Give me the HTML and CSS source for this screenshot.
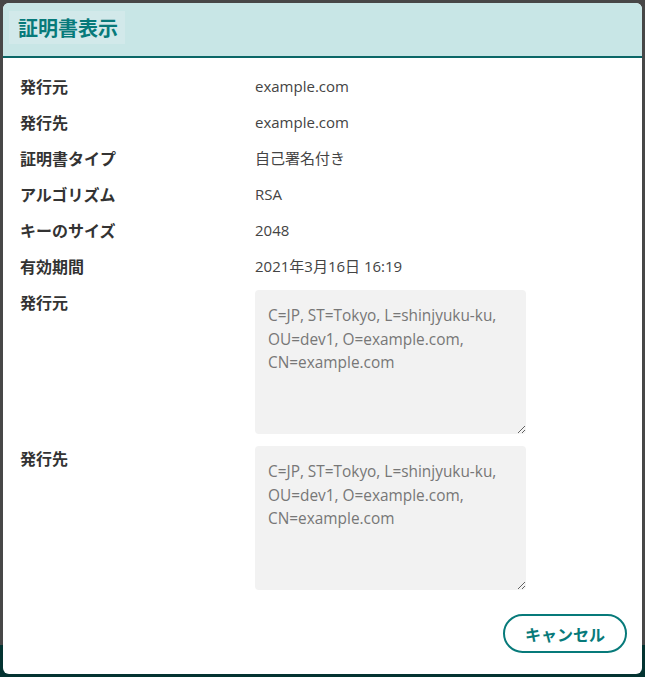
FILE: index.html
```html
<!DOCTYPE html>
<html lang="ja">
<head>
<meta charset="utf-8">
<title>証明書表示</title>
<link rel="stylesheet" href="styles.css">
</head>
<body>
<div class="dialog">
  <div class="dialog-header">
    <h1 class="dialog-title">証明書表示</h1>
  </div>
  <div class="dialog-body">
    <dl class="cert-grid">
      <dt>発行元</dt><dd>example.com</dd>
      <dt>発行先</dt><dd>example.com</dd>
      <dt>証明書タイプ</dt><dd>自己署名付き</dd>
      <dt>アルゴリズム</dt><dd>RSA</dd>
      <dt>キーのサイズ</dt><dd>2048</dd>
      <dt>有効期間</dt><dd>2021年3月16日 16:19</dd>
      <dt>発行元</dt><dd><textarea class="dn" readonly>C=JP, ST=Tokyo, L=shinjyuku-ku, OU=dev1, O=example.com, CN=example.com</textarea></dd>
      <dt>発行先</dt><dd><textarea class="dn" readonly>C=JP, ST=Tokyo, L=shinjyuku-ku, OU=dev1, O=example.com, CN=example.com</textarea></dd>
    </dl>
  </div>
  <div class="dialog-footer">
    <button class="btn-cancel" type="button">キャンセル</button>
  </div>
</div>
</body>
</html>
```
FILE: styles.css
```css
html, body {
  margin: 0;
  height: 100%;
}
body {
  background: linear-gradient(to bottom, #474747 0, #474747 645px, #033331 645px);
  padding: 3px;
  box-sizing: border-box;
  font-family: "Open Sans", "Noto Sans CJK JP", sans-serif;
}
.dialog {
  width: 639px;
  height: 671px;
  background: #fff;
  border-radius: 6px;
  overflow: hidden;
  display: flex;
  flex-direction: column;
}
.dialog-header {
  background: #c8e6e6;
  border-bottom: 2px solid #0b6767;
  padding: 8px 0 0 6px;
  box-sizing: content-box;
  height: 45px;
}
.dialog-title {
  display: inline-block;
  margin: 0;
  padding: 0 7px 0 9px;
  height: 33px;
  line-height: 33px;
  background: #d2e9ea;
  color: #077a7a;
  font-family: "Noto Sans CJK JP", sans-serif;
  font-size: 20px;
  font-weight: 700;
}
.dialog-body {
  padding: 16px 15px 0 17px;
  flex: 1;
}
.cert-grid {
  margin: 0;
  display: grid;
  grid-template-columns: 235px 1fr;
  row-gap: 12px;
  line-height: 24px;
  font-size: 15px;
}
.cert-grid dt {
  font-family: "Noto Sans CJK JP", sans-serif;
  font-weight: 700;
  color: #333;
  font-size: 16px;
}
.cert-grid dd {
  margin: 0;
  color: #444;
}
.dn {
  display: block;
  width: 271px;
  height: 144px;
  box-sizing: border-box;
  border: none;
  border-radius: 4px;
  background: #f2f2f2;
  color: #777;
  font-family: "Open Sans", "Noto Sans CJK JP", sans-serif;
  font-size: 15.4px;
  line-height: 23.5px;
  padding: 14px 13px 13px;
  outline: none;
}
.dialog-footer {
  display: flex;
  justify-content: flex-end;
  padding: 0 15px 21px 0;
}
.btn-cancel {
  width: 124px;
  height: 39px;
  border: 2px solid #077a7a;
  border-radius: 20px;
  background: #fff;
  color: #077a7a;
  font-family: "Noto Sans CJK JP", sans-serif;
  font-size: 16px;
  font-weight: 700;
  cursor: pointer;
}
```
